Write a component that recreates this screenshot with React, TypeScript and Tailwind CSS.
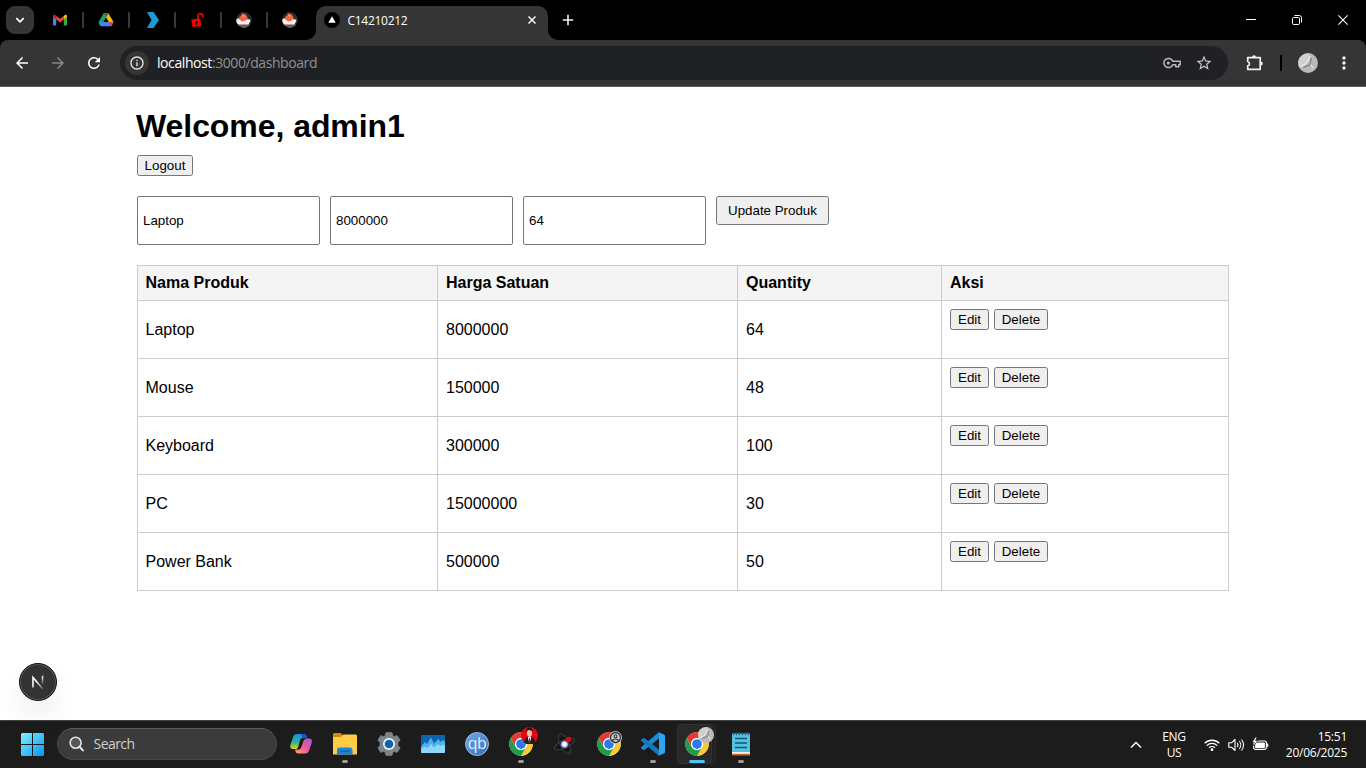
import React from "react";
import {
  MdArrowBack,
  MdArrowForward,
  MdRefresh,
  MdInfoOutline,
  MdStarBorder,
  MdMoreVert,
} from "react-icons/md";

const products = [
  { name: "Laptop", price: "8000000", qty: "64" },
  { name: "Mouse", price: "150000", qty: "48" },
  { name: "Keyboard", price: "300000", qty: "100" },
  { name: "PC", price: "15000000", qty: "30" },
  { name: "Power Bank", price: "500000", qty: "50" },
];

function Gmail() {
  return (
    <svg width="16" height="16" viewBox="0 0 16 16">
      <path d="M1 4.600v7.800c0 .6.4 1 1 1h2.200V7L1 4.600z" fill="#4285f4" />
      <path d="M11.800 7v6.400H14c.6 0 1-.4 1-1V4.600L11.800 7z" fill="#34a853" />
      <path d="M1 4.200V5l3.200 2.600V3.800l-.7-.5C2.400 2.400 1 3 1 4.200z" fill="#c5221f" />
      <path d="M4.200 3.800L8 6.700l3.800-2.900v3.800L8 10.500 4.200 7.600z" fill="#ea4335" />
      <path d="M11.800 3.800v3.800L15 5v-.8c0-1.200-1.400-1.800-2.400-1z" fill="#fbbc04" />
    </svg>
  );
}

function Drive() {
  return (
    <svg width="16" height="16" viewBox="0 0 16 16">
      <path d="M5.500 1.500h5L8 5.800 3.300 13.900 1.500 13 .6 10z" fill="#1ea362" />
      <path d="M5.500 1.500h5L15.500 10h-4.900z" fill="#fbbc04" />
      <path d="M5.500 1.500h5L8 5.800z" fill="#188038" />
      <path d="M.6 10h14.900l-2.100 4.200H2.800z" fill="#4285f4" />
      <path d="M10.600 10h4.900l-2.100 4.200z" fill="#ea4335" />
      <path d="M8 5.800L10.500 10h-5z" fill="#000" />
    </svg>
  );
}

function BlueArrow() {
  return (
    <svg width="16" height="16" viewBox="0 0 16 16">
      <path d="M3 0h6.500L15 8l-5.500 8H3l4.500-8z" fill="#1c9ad6" />
    </svg>
  );
}

function OpenLock() {
  return (
    <svg width="16" height="16" viewBox="0 0 16 16">
      <path d="M8 8V4.200C8 2.300 9.200 1.500 10.600 1.700c1.700.2 2.600 1.400 2.200 3" fill="none" stroke="#f50000" strokeWidth="1.800" strokeLinecap="round" />
      <path d="M1.300 7.600l9-1 1 7.400-8.800 1z" fill="#f50000" />
      <circle cx="6.300" cy="10.300" r="1.200" fill="#180000" />
      <path d="M5.800 10.500h1l.4 2.200H5.800z" fill="#180000" />
    </svg>
  );
}

function Bowl() {
  return (
    <svg width="16" height="16" viewBox="0 0 16 16">
      <circle cx="8" cy="8" r="7.900" fill="#292d35" />
      <path d="M.3 8C.8 6.500 3 6.300 5 7l7 .3c2-.3 2.600.6 2.300 1.800L12.200 13H2.500C1 11.500.3 10 .3 8z" fill="#f3f1ee" />
      <path d="M3 5.200L6 2.800 5.500 1l4.200 1.500L11.800 6l-2 2.600-3.500.8L3.200 7.600z" fill="#f26541" />
      <path d="M6.400 3.600l2 .6" stroke="#f9b19c" strokeWidth="1" />
      <path d="M1.600 12.600h12.700l-1.600 1.400H3z" fill="#a9452f" />
      <path d="M4 14.200h8L9.500 15.700h-3z" fill="#5d7180" />
    </svg>
  );
}

function Pinned({ children, last = false }: { children: React.ReactNode; last?: boolean }) {
  return (
    <div className="relative flex h-10 w-[46px] items-center justify-center">
      {children}
      {!last && <span className="absolute top-3 -right-px h-4 w-0.5 rounded-full bg-[#3a3a3a]" />}
    </div>
  );
}

function Avatar({ size }: { size: number }) {
  return (
    <svg width={size} height={size} viewBox="0 0 20 20">
      <circle cx="10" cy="10" r="10" fill="#b9b9b7" />
      <path d="M2 4.500C5 1 9 0 12 .5L9 7l-7 8C-.5 11 0 7 2 4.500z" fill="#d0d0cd" />
      <path d="M12.500 3L8 10.500 2.500 13.700" stroke="#ecece9" strokeWidth="1.500" fill="none" />
      <path d="M13.200 4.500l-1 7.200-6.800 2.600" stroke="#858583" strokeWidth="1.300" fill="none" />
      <path d="M12.800 11.700l2.400 3.500" stroke="#e4e4e1" strokeWidth="1.300" />
    </svg>
  );
}

function TabStrip() {
  return (
    <div className="flex h-10 bg-black pl-1.5 text-white">
      <div className="mt-1.5 mr-[3px] flex size-7 items-center justify-center rounded-[9px] bg-[#353535]">
        <svg width="10" height="8" viewBox="0 0 10 8">
          <path d="M1.300 2.200L5 5.800l3.700-3.600" fill="none" stroke="#fff" strokeWidth="1.700" />
        </svg>
      </div>
      <Pinned><Gmail /></Pinned>
      <Pinned><Drive /></Pinned>
      <Pinned><BlueArrow /></Pinned>
      <Pinned><OpenLock /></Pinned>
      <Pinned><Bowl /></Pinned>
      <Pinned last><Bowl /></Pinned>
      <div className="relative mt-1.5 ml-[3px] flex h-[34px] w-[232px] items-center rounded-t-[10px] bg-[#353535] pb-1.5 pl-2">
        <svg className="absolute bottom-0 -left-2.5" width="10" height="10" viewBox="0 0 10 10">
          <path d="M10 0v10H0A10 10 0 0 0 10 0z" fill="#353535" />
        </svg>
        <svg className="absolute -right-2.5 bottom-0" width="10" height="10" viewBox="0 0 10 10">
          <path d="M0 0v10h10A10 10 0 0 1 0 0z" fill="#353535" />
        </svg>
        <svg width="16" height="16" viewBox="0 0 16 16">
          <circle cx="8" cy="8" r="8" fill="#000" />
          <path d="M8 4.200L11.700 10.700H4.300z" fill="#fff" />
        </svg>
        <span className="ml-[7.500px] flex-1 pt-px text-[12px] leading-4 tracking-[-0.28px]">C14210212</span>
        <svg className="mr-[11px]" width="10" height="10" viewBox="0 0 10 10">
          <path d="M1.500 1.500l7 7M8.500 1.500l-7 7" stroke="#f1f1f1" strokeWidth="1.600" />
        </svg>
      </div>
      <svg className="mt-3.5 ml-3.5" width="12" height="12" viewBox="0 0 12 12">
        <path d="M6 .8v10.400M.8 6h10.400" stroke="#eee" strokeWidth="1.600" />
      </svg>
      <div className="ml-auto flex h-10">
        <div className="flex w-[46px] items-center justify-center">
          <svg width="10" height="10" viewBox="0 0 10 10"><path d="M0 4.500h10" stroke="#fff" /></svg>
        </div>
        <div className="flex w-[46px] items-center justify-center">
          <svg width="10" height="10" viewBox="0 0 10 10" fill="none" stroke="#fff">
            <rect x=".5" y="2.500" width="7" height="7" rx="1.200" />
            <path d="M2.500.5h4.800a2.200 2.200 0 0 1 2.200 2.200v4.800" />
          </svg>
        </div>
        <div className="flex w-[46px] items-center justify-center">
          <svg width="10" height="10" viewBox="0 0 10 10"><path d="M.4.4l9.200 9.200M9.600.4L.4 9.600" stroke="#fff" strokeWidth="1.100" /></svg>
        </div>
      </div>
    </div>
  );
}

function Toolbar() {
  return (
    <div className="bg-black">
      <div className="flex h-[47px] items-center rounded-t-lg border-b border-[#5c5c5c] bg-[#353535] pl-[13px] text-white">
        <MdArrowBack size={18} className="mr-[18px]" />
        <MdArrowForward size={18} className="mr-[18px] text-[#868686]" />
        <MdRefresh size={18} />
        <div className="ml-[17px] flex h-[34px] w-[1108px] items-center rounded-full bg-[#202124] pl-[5px]">
          <div className="flex size-6 items-center justify-center rounded-full bg-[#353535]">
            <MdInfoOutline size={16} className="text-[#e6e6e6]" />
          </div>
          <span className="ml-2 flex-1 text-[14px] leading-5 tracking-[-0.42px] text-[#8e9195]">
            <span className="text-white">localhost</span>:3000/dashboard
          </span>
          <svg width="18" height="12" viewBox="0 0 18 12" fill="none" stroke="#b9b9b9" strokeWidth="1.500">
            <path d="M9.700 4.200h7.500v3.600h-1.400v2h-3.100v-2h-3A4.600 4.600 0 1 1 9.700 4.200z" strokeLinejoin="round" />
            <circle cx="5.300" cy="6" r="1.500" fill="#b9b9b9" stroke="none" />
          </svg>
          <MdStarBorder size={18} className="mr-[15px] ml-[14px] text-[#c7c7c7]" />
        </div>
        <svg className="ml-[18px]" width="18" height="18" viewBox="0 0 18 18">
          <path
            d="M1.700 3.600h12.500v11.700H1.700v-3.500a2.200 2.200 0 0 0 0-4.300z"
            fill="none" stroke="#f1f1f1" strokeWidth="1.700" strokeLinejoin="round"
          />
          <path d="M6 3.300a2 2 0 0 1 4 0zM14.800 7.500a2 2 0 0 1 0 4z" fill="#f1f1f1" />
        </svg>
        <span className="ml-4 h-4 w-0.5 bg-black" />
        <span className="ml-4"><Avatar size={20} /></span>
        <MdMoreVert size={20} className="ml-4 text-[#f1f1f1]" />
      </div>
    </div>
  );
}

function Btn({ className, children }: { className: string; children: React.ReactNode }) {
  return (
    <button
      className={`flex items-center justify-center rounded-[2.500px] border border-[#767676] bg-[#efefef] font-['Liberation_Sans',Arial,sans-serif] text-[13.333px] leading-[15px] text-black ${className}`}
    >
      {children}
    </button>
  );
}

function Field({ value }: { value: string }) {
  return (
    <input
      defaultValue={value}
      className="h-[49px] w-[183px] rounded-[2px] border border-[#767676] bg-white px-[5px] font-['Liberation_Sans',Arial,sans-serif] text-[13.333px] text-black outline-none"
    />
  );
}

function Dashboard() {
  return (
    <main className="relative h-[633px] bg-white pl-[137px] font-['Liberation_Sans',Arial,sans-serif] text-base text-black">
      <h1 className="-ml-px pt-[21px] text-[32px] leading-[37px] font-bold tracking-[-0.06px]">Welcome, admin1</h1>
      <Btn className="mt-2.5 h-[21px] w-14">Logout</Btn>
      <div className="mt-5 flex items-start gap-2.5">
        <Field value="Laptop" />
        <Field value="8000000" />
        <Field value="64" />
        <Btn className="h-[29px] w-[113px]">Update Produk</Btn>
      </div>
      <table className="mt-5 w-[1091px] table-fixed border-collapse text-left leading-[18px]">
        <colgroup>
          <col className="w-[300px]" />
          <col className="w-[300px]" />
          <col className="w-[204px]" />
          <col className="w-[287px]" />
        </colgroup>
        <thead>
          <tr className="h-[35px] bg-[#f4f4f4]">
            {["Nama Produk", "Harga Satuan", "Quantity", "Aksi"].map((h) => (
              <th key={h} className="border border-[#ccc] px-2 py-0 font-bold first:pl-[7.500px]">{h}</th>
            ))}
          </tr>
        </thead>
        <tbody>
          {products.map((p) => (
            <tr key={p.name} className="h-[58px]">
              <td className="border border-[#ccc] py-0 pr-2 pl-[7.500px]">{p.name}</td>
              <td className="border border-[#ccc] px-2 py-0">{p.price}</td>
              <td className="border border-[#ccc] px-2 py-0">{p.qty}</td>
              <td className="border border-[#ccc] px-2 pt-2 pb-0 align-top">
                <div className="flex gap-[5px]">
                  <Btn className="h-[21px] w-[39px]">Edit</Btn>
                  <Btn className="h-[21px] w-[54px]">Delete</Btn>
                </div>
              </td>
            </tr>
          ))}
        </tbody>
      </table>
      <div className="absolute bottom-[19px] left-[19px] flex size-[38px] items-center justify-center rounded-full border border-[#111] bg-[#333] shadow-[inset_0_0_0_1px_#5a5a5a,0_16px_32px_-8px_rgba(0,0,0,0.2)]">
        <svg width="14" height="14" viewBox="0 0 14 14" fill="none">
          <defs>
            <linearGradient id="n1" x1="6" y1="6" x2="12.500" y2="14" gradientUnits="userSpaceOnUse">
              <stop stopColor="#fff" /><stop offset="1" stopColor="#fff" stopOpacity="0.15" />
            </linearGradient>
            <linearGradient id="n2" x1="11" y1="1" x2="11" y2="10" gradientUnits="userSpaceOnUse">
              <stop stopColor="#fff" /><stop offset="1" stopColor="#fff" stopOpacity="0" />
            </linearGradient>
          </defs>
          <path d="M2 12.500V2.400L11.800 13.900" stroke="url(#n1)" strokeWidth="1.600" />
          <path d="M11.500 1.300h.01v9" stroke="url(#n2)" strokeWidth="1.600" />
        </svg>
      </div>
    </main>
  );
}

function Chrome() {
  const d = "M24 13H43.050A22 22 0 0 0 4.950 13L14.470 29.500A11 11 0 0 1 24 13z";
  return (
    <svg width="26" height="26" viewBox="0 0 48 48">
      <circle cx="24" cy="24" r="21.500" fill="#fff" />
      <path d={d} fill="#e33b2e" />
      <path d={d} fill="#fcc934" transform="rotate(120 24 24)" />
      <path d={d} fill="#229b4b" transform="rotate(240 24 24)" />
      <circle cx="24" cy="24" r="11" fill="#fff" />
      <circle cx="24" cy="24" r="9" fill="#2a7bf0" />
    </svg>
  );
}

function TaskItem({ dot = false, active = false, children }: { dot?: boolean; active?: boolean; children: React.ReactNode }) {
  return (
    <div className="relative flex h-[46px] w-11 items-center justify-center">
      {active && <span className="absolute top-[3px] left-2 h-10 w-[33px] rounded-[4px] border border-[#2c2c2c] bg-[#222]" />}
      {active && <span className="absolute top-[3px] left-0.5 h-10 w-[35px] rounded-[4px] border border-[#333] bg-[#292929]" />}
      <div className="relative">{children}</div>
      {dot && <span className="absolute bottom-1 left-[19px] h-[3px] w-1.5 rounded-full bg-[#9a9a9a]" />}
      {active && <span className="absolute bottom-1 left-3.5 h-[3px] w-4 rounded-full bg-[#4cc2ff]" />}
    </div>
  );
}

function Taskbar() {
  return (
    <div className="flex h-12 border-t border-[#414141] bg-[#1c1c1c] pl-[21px] text-white">
      <svg className="mt-3" width="23" height="23" viewBox="0 0 23 23">
        <defs>
          <linearGradient id="winfill" x1="0" y1="0" x2="23" y2="23" gradientUnits="userSpaceOnUse">
            <stop stopColor="#7df3ff" /><stop offset="1" stopColor="#0a93f5" />
          </linearGradient>
        </defs>
        <path d="M1 0h10v11H0V1zM12 0h10l1 1v10H12zM0 12h11v11H1l-1-1zM12 12h11v10l-1 1H12z" fill="url(#winfill)" />
      </svg>
      <div className="mt-[7px] ml-[13px] flex h-8 w-[220px] items-center rounded-full border border-[#484848] border-t-[#5a5a5a] bg-[#3b3b3b] pl-[11px]">
        <svg width="15" height="16" viewBox="0 0 15 16">
          <circle cx="6.600" cy="6.800" r="5.500" fill="#565656" stroke="#e4e4e4" strokeWidth="1.600" />
          <path d="M10.600 10.800L13.900 14.400" stroke="#e4e4e4" strokeWidth="2" strokeLinecap="round" />
        </svg>
        <span className="ml-[9.500px] text-[14px] leading-5 tracking-[-0.55px] text-[#d0d0d0]">Search</span>
      </div>
      <div className="ml-0.5 flex">
        <TaskItem>
          <svg width="24" height="24" viewBox="0 0 24 24">
            <defs>
              <linearGradient id="cp1" x1="0" y1="0" x2="0" y2="1">
                <stop stopColor="#168ff0" /><stop offset=".55" stopColor="#2fb28a" /><stop offset="1" stopColor="#f0cf1c" />
              </linearGradient>
              <linearGradient id="cp2" x1="1" y1="0" x2="0" y2="1">
                <stop stopColor="#9a5bdc" /><stop offset=".5" stopColor="#ee5a9a" /><stop offset="1" stopColor="#ffa45c" />
              </linearGradient>
            </defs>
            <path d="M8 2h7c1.300 0 2 .8 2.400 2l.7 2h-4.500c-1.500 0-2.200.8-2.700 2.500L9.200 15c-.5 1.500-1.500 2-3 2H4C1.500 17 .8 15 1.500 12.500l2.800-8C5 2.800 6.200 2 8 2z" fill="url(#cp1)" />
            <path d="M12 2h3c1.300 0 2 .8 2.400 2l.7 2h-4.500z" fill="#1556d4" />
            <path d="M16 21.500H9c-1.300 0-2-.8-2.400-2L6 17.400h3.200c1.700 0 2.600-.9 3.100-2.400l2.300-6.500c.5-1.500 1.200-2 2.700-2h3c2.300 0 3.100 2 2.400 4.500l-2.800 8c-.7 1.700-2 2.500-3.900 2.500z" fill="url(#cp2)" />
            <path d="M13.300 6.500h4.500L14.600 8.500 12.300 15c-.5 1.500-1.400 2.400-3.100 2.400h-1z" fill="#1c1c1c" opacity=".55" />
          </svg>
        </TaskItem>
        <TaskItem dot>
          <svg width="24" height="24" viewBox="0 0 24 24">
            <path d="M0 2.500C0 1.700.6 1 1.500 1h6l2.500 2v4H0z" fill="#c98d0a" />
            <path d="M0 5h8l2.500-2.500H22.500c.8 0 1.500.7 1.500 1.500V22.500H0z" fill="#ffcd45" />
            <path d="M4 22.500V18c0-1.500 1-2.500 2.500-2.500h10.500c1.500 0 2.500 1 2.500 2.500v4.500z" fill="#1686d9" />
            <path d="M7.500 18.500h9v1.200h-9z" fill="#0c5fa5" />
          </svg>
        </TaskItem>
        <TaskItem>
          <svg width="24" height="24" viewBox="0 0 24 24">
            <path d="M9 .8h6l.7 3 1.600.9L20.200 3.700l2.800 4.600-2.100 2.200v3l2.100 2.200-2.800 4.600-2.900-1-1.600.9-.7 3H9l-.7-3-1.600-.9-2.900 1L1 15.700l2.100-2.200v-3L1 8.300l2.800-4.600 2.900 1 1.600-.9z" fill="#7d858b" stroke="#7d858b" strokeWidth="1" strokeLinejoin="round" />
            <circle cx="12" cy="12" r="6" fill="#f1f6fa" />
            <circle cx="12" cy="12" r="4.300" fill="#0d63ae" />
          </svg>
        </TaskItem>
        <TaskItem>
          <svg width="24" height="24" viewBox="0 0 24 24">
            <rect y="3" width="24" height="18" rx="1.300" fill="#0b65ae" />
            <path d="M0 14.500L4 10l2 2L10 5.500l3 6L17.500 7l2 3L22 8l2 1.500V20H0z" fill="#51b0e8" />
            <path d="M0 17l4-2.500 2.500 1.500L10 12l3 3.500 4-3.500 2.500 2L22 12.500l2 1.500v6c0 .6-.5 1-1 1H1c-.6 0-1-.4-1-1z" fill="#8bd8fb" />
          </svg>
        </TaskItem>
        <TaskItem>
          <div className="flex size-6 items-center justify-center rounded-full border border-[#9cbce4] bg-linear-to-br from-[#6ea9e8] to-[#326fb8] pb-[3px] text-[16px] leading-5 tracking-[-0.5px] text-[#e3efff]">qb</div>
        </TaskItem>
        <TaskItem dot>
          <Chrome />
          <svg className="absolute -top-1 -right-1" width="17" height="17" viewBox="0 0 17 17">
            <circle cx="8.500" cy="8.500" r="8.500" fill="#e30613" />
            <path d="M3 15.500l1-4.300 3-1.200h3l3 1.200 1 4.300a8.500 8.500 0 0 1-11 0z" fill="#211f26" />
            <path d="M7.300 9.500h2.400l.5 1.500-1.700 5-1.700-5z" fill="#fff" />
            <ellipse cx="8.500" cy="6" rx="2.600" ry="3.600" fill="#efbc9f" />
            <path d="M5.500 5.500C4.700 2 6.500.5 8.500.5s3.800 1.500 3 5l-1-2-3.800-.5z" fill="#201613" />
            <path d="M8 11h1v4H8z" fill="#b31b2b" />
          </svg>
        </TaskItem>
        <TaskItem>
          <svg width="24" height="24" viewBox="0 0 24 24">
            <defs>
              <radialGradient id="core">
                <stop stopColor="#fff" /><stop offset=".4" stopColor="#eeeefa" /><stop offset=".7" stopColor="#5658b8" /><stop offset="1" stopColor="#1c1c40" stopOpacity="0" />
              </radialGradient>
            </defs>
            <circle cx="11.500" cy="12" r="7" fill="#101012" />
            <g fill="none" stroke="#363636" strokeWidth="1.200">
              <ellipse cx="11.500" cy="12" rx="11" ry="4" transform="rotate(-25 11.500 12)" />
              <ellipse cx="11.500" cy="12" rx="11" ry="4.500" transform="rotate(65 11.500 12)" />
            </g>
            <circle cx="11.500" cy="12.300" r="5.200" fill="url(#core)" />
            <circle cx="15.500" cy="7.500" r="2.700" fill="#d00d0d" />
          </svg>
        </TaskItem>
        <TaskItem>
          <Chrome />
          <svg className="absolute top-0 right-0" width="13" height="13" viewBox="0 0 13 13">
            <circle cx="6.500" cy="6.500" r="6.500" fill="#c9ced2" />
            <circle cx="6.500" cy="6.500" r="5" fill="none" stroke="#2f3336" strokeWidth="1.300" />
            <circle cx="6.500" cy="5.200" r="1.500" fill="none" stroke="#2f3336" strokeWidth="1.100" />
            <path d="M3.200 10c1-2.700 5.600-2.700 6.600 0" fill="none" stroke="#2f3336" strokeWidth="1.200" />
          </svg>
        </TaskItem>
        <TaskItem dot>
          <svg width="24" height="24" viewBox="0 0 24 24">
            <path d="M18 6.600L3 18.300 0 16.200v-1L18 0z" fill="#1c8ad2" />
            <path d="M18 17.400L3 5.700 0 7.800v1L18 24z" fill="#1478bd" />
            <path d="M17 0l5.900 2.400c.7.300 1.100.9 1.100 1.600v16c0 .7-.4 1.300-1.100 1.600L17 24c.6-.3 1-.8 1-1.500v-21C18 .8 17.600.3 17 0z" fill="#2ba6ef" />
          </svg>
        </TaskItem>
        <TaskItem active>
          <Chrome />
          <span className="absolute -top-1 -right-1"><Avatar size={16} /></span>
        </TaskItem>
        <TaskItem dot>
          <svg width="20" height="24" viewBox="0 0 20 24">
            <path d="M1 20h18v3.500H1z" fill="#bf6a31" />
            <path d="M1 19.500h18v2.300H1z" fill="#f4efe8" />
            <path d="M1 1.500h18v18.500H1z" fill="#56c0e2" />
            <path d="M2.500.2v3M5.500.2v3M8.500.2v3M11.500.2v3M14.500.2v3M17.500.2v3" stroke="#1a637e" strokeWidth="1.200" />
            <path d="M4 6.500h12M4 11h12M4 15.500h12" stroke="#0b5875" strokeWidth="1.700" />
          </svg>
        </TaskItem>
      </div>
      <div className="ml-auto flex h-[47px] items-center pr-[19px] text-[12px] leading-4">
        <svg width="12" height="8" viewBox="0 0 12 8"><path d="M1 6.500l5-5 5 5" fill="none" stroke="#fff" strokeWidth="1.500" /></svg>
        <div className="ml-5 w-6 text-center text-[12px] tracking-[-0.3px]"><div>ENG</div><div>US</div></div>
        <svg className="ml-[18px]" width="16" height="16" viewBox="0 0 16 16" fill="none" stroke="#fff" strokeWidth="1.300">
          <path d="M.7 6.300a10.300 10.300 0 0 1 14.600 0M2.800 8.600a7.300 7.300 0 0 1 10.400 0M5 10.800a4.300 4.300 0 0 1 6 0" />
          <circle cx="8" cy="12.700" r="1.400" fill="#fff" stroke="none" />
        </svg>
        <svg className="ml-2" width="17" height="16" viewBox="0 0 17 16" fill="none" stroke="#fff" strokeWidth="1.100">
          <path d="M.8 5.800h2.700L7 2.500v11l-3.500-3.300H.8z" strokeLinejoin="round" />
          <path d="M9.200 6a3.200 3.200 0 0 1 0 4M11.300 4.200a5.800 5.800 0 0 1 0 7.600M13.500 2.500a8.500 8.500 0 0 1 0 11" />
        </svg>
        <svg className="ml-[7px]" width="17" height="16" viewBox="0 0 17 16">
          <rect x="1.600" y="4" width="12.800" height="8.400" rx="1.800" fill="none" stroke="#fff" strokeWidth="1.200" />
          <rect x="3.100" y="5.500" width="9.800" height="5.400" rx=".7" fill="#fff" />
          <path d="M15.300 6.800h.7v3h-.7z" fill="#fff" stroke="#fff" strokeWidth=".6" />
          <path d="M3.400 0L0 5.300h2.200L1.500 9 6 3.500h-2.400L5 0z" fill="#fff" stroke="#1c1c1c" strokeWidth=".7" />
        </svg>
        <div className="ml-4 w-[62px] text-right text-[12px] tracking-[-0.25px] whitespace-nowrap"><div>15:51</div><div>20/06/2025</div></div>
      </div>
    </div>
  );
}

export default function App() {
  return (
    <div className="h-[768px] w-[1366px] overflow-hidden bg-white font-['Open_Sans','Noto_Sans',sans-serif]">
      <TabStrip />
      <Toolbar />
      <Dashboard />
      <Taskbar />
    </div>
  );
}
